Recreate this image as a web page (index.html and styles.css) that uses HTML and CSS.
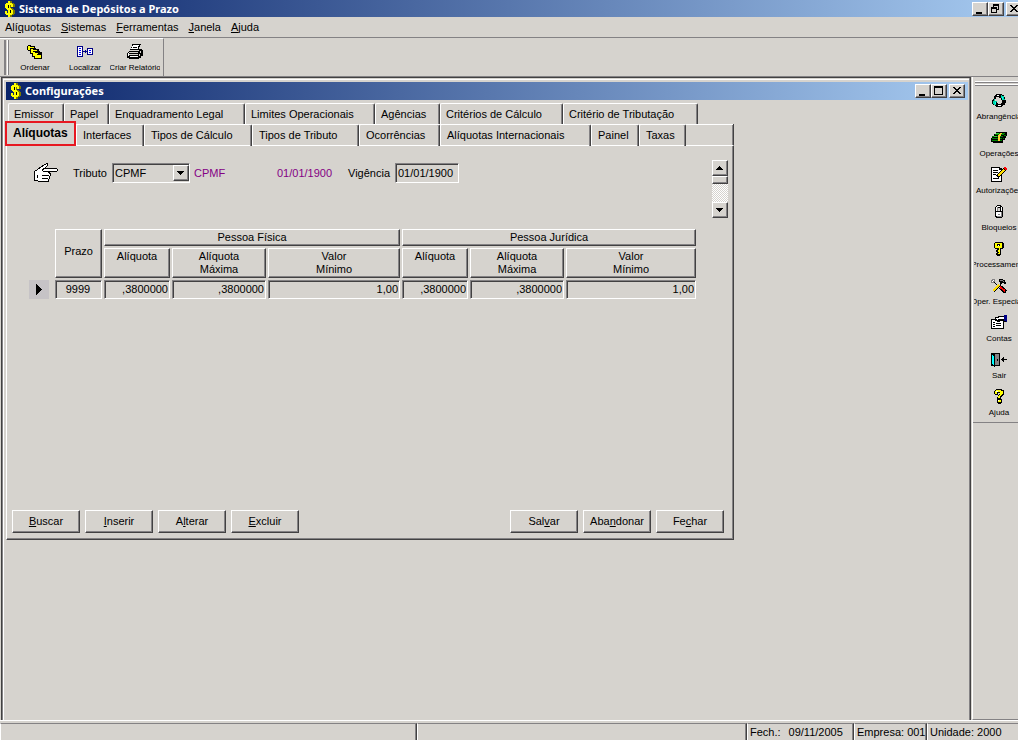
FILE: index.html
```html
<!DOCTYPE html>
<html lang="pt-BR">
<head>
<meta charset="utf-8">
<title>Sistema de Depósitos a Prazo</title>
<link rel="stylesheet" href="styles.css">
</head>
<body>
<svg class="defs" aria-hidden="true">
  <symbol id="dollar" viewBox="0 0 12 16">
    <path fill="#000" d="M6 0h1v2h-1zM9 4h1v2h-1zM10 3h1v3h-1zM3 6h1v1h-1zM9 9h2v4h-1v1h-2v1h-1v-2h2zM2 13h3v1h-3zM5 15h3v1h-3z"/>
    <path fill="#7b7900" d="M6 0h2v2h2v1h1v3h-2v-2h-2v3h2v1h1v1h1v4h-1v1h-2v2h-2zM4 7h2v1h-2z"/>
    <path fill="#ffff00" d="M4 0h2v2h2v1h1v3h-2v-2h-1v3h1v1h1v1h1v4h-1v1h-2v2h-2v-2h-2v-1h-1v-3h2v2h1v-3h-1v-1h-1v-1h-1v-4h1v-1h2z"/>
    <path fill="#000" d="M4 4h1v3h-1zM6 9h1v3h-1z"/>
  </symbol>
  <symbol id="min" viewBox="0 0 12 10"><path d="M2 8h6v2h-6z"/></symbol>
  <symbol id="max" viewBox="0 0 12 10"><path fill-rule="evenodd" d="M1 0h9v9h-9zM2 2h7v6h-7z"/></symbol>
  <symbol id="restore" viewBox="0 0 12 10"><path fill-rule="evenodd" d="M3 0h6v6h-2v3h-6v-6h2zM4 2v1h3v2h1v-3zM2 5v3h4v-3z"/></symbol>
  <symbol id="close" viewBox="0 0 12 10"><path d="M2 1h2v1h1v1h2v-1h1v-1h2v1h-1v1h-1v1h-1v1h1v1h1v1h1v1h-2v-1h-1v-1h-2v1h-1v1h-2v-1h1v-1h1v-1h1v-1h-1v-1h-1v-1h-1z"/></symbol>
  <symbol id="up" viewBox="0 0 8 4"><path d="M3 0h1v1h1v1h1v1h1v1h-7v-1h1v-1h1v-1h1z"/></symbol>
  <symbol id="down" viewBox="0 0 8 4"><path d="M0 0h7v1h-1v1h-1v1h-1v1h-1v-1h-1v-1h-1v-1h-1z"/></symbol>
</svg>

<div class="app">
  <header class="titlebar">
    <svg class="dollar"><use href="#dollar"/></svg>
    <h1 class="title">Sistema de Depósitos a Prazo</h1>
    <div class="winbtns winbtns-app">
      <button class="winbtn" aria-label="Minimizar"><svg><use href="#min"/></svg></button>
      <button class="winbtn" aria-label="Restaurar"><svg><use href="#restore"/></svg></button>
      <button class="winbtn winbtn-close" aria-label="Fechar"><svg><use href="#close"/></svg></button>
    </div>
  </header>

  <nav class="menubar">
    <button>Alí<u>q</u>uotas</button>
    <button><u>S</u>istemas</button>
    <button><u>F</u>erramentas</button>
    <button><u>J</u>anela</button>
    <button><u>A</u>juda</button>
  </nav>

  <div class="toolbar">
    <div class="grip"></div>
    <button class="tool">
      <svg viewBox="0 0 16 16"><path d="M1 1h3v1h4v2h1v1h3v2h1v1h2v7h-8v-2h-2v-3h-2v-3h-2v-1h-1v-4h1z"/><path fill="#ff0" d="M1 2h2v1h4v1h-4v2h-2zM4 5h2v1h4v1h-4v2h-2zM6 8h2v1h3v1h-3v2h-2zM8 10h2v1h4v3h-6z"/></svg>
      <span>Ordenar</span>
    </button>
    <button class="tool">
      <svg viewBox="0 0 16 16"><path fill="#000084" d="M0 2h6v11h-6zM10 4h6v7h-6zM6 7h2v1h-2zM8 6h1v3h-1zM9 7h1v1h-1z"/><path fill="#fff" d="M1 3h4v9h-4zM11 5h4v5h-4z"/><path fill="#00f" d="M2 4h2v1h-2zM2 6h2v1h-2zM2 8h2v1h-2zM2 10h2v1h-2zM12 6h2v1h-2zM12 8h2v1h-2z"/></svg>
      <span>Localizar</span>
    </button>
    <button class="tool">
      <svg viewBox="0 0 16 16"><path d="M5 0h9v1h-1v2h-1v2h3v1h1v6h-2v2h-2v1h-10v-1h-2v-5h1v-1h1v-1h1v-2h1v-2h1z"/><path fill="#fff" d="M6 1h6v1h-1v3h-7v-1h1v-2h1zM1 9h1v3h-1zM3 12h8v1h-8z"/><path d="M6 3h4v1h-4z"/><path fill="#d6d3ce" d="M4 6h8v1h-9v-1zM2 8h9v1h-9zM2 10h9v1h-9zM13 7h1v2h-1zM12 10h1v2h-1z"/></svg>
      <span>Criar Relatório</span>
    </button>
  </div>

  <div class="workspace">
    <main class="mdi">
      <section class="child">
        <header class="titlebar titlebar-child">
          <svg class="dollar"><use href="#dollar"/></svg>
          <h2 class="title">Configurações</h2>
          <div class="winbtns">
            <button class="winbtn" aria-label="Minimizar janela"><svg><use href="#min"/></svg></button>
            <button class="winbtn" aria-label="Maximizar janela"><svg><use href="#max"/></svg></button>
            <button class="winbtn winbtn-close" aria-label="Fechar janela"><svg><use href="#close"/></svg></button>
          </div>
        </header>

        <div class="form">
          <div class="tabs tabs-back" role="tablist">
            <button class="tab" role="tab">Emissor</button>
            <button class="tab" role="tab">Papel</button>
            <button class="tab" role="tab">Enquadramento Legal</button>
            <button class="tab" role="tab">Limites Operacionais</button>
            <button class="tab" role="tab">Agências</button>
            <button class="tab" role="tab">Critérios de Cálculo</button>
            <button class="tab" role="tab">Critério de Tributação</button>
          </div>
          <div class="tabs tabs-front" role="tablist">
            <button class="tab tab-active" role="tab" aria-selected="true">Alíquotas</button>
            <button class="tab" role="tab">Interfaces</button>
            <button class="tab" role="tab">Tipos de Cálculo</button>
            <button class="tab" role="tab">Tipos de Tributo</button>
            <button class="tab" role="tab">Ocorrências</button>
            <button class="tab" role="tab">Alíquotas Internacionais</button>
            <button class="tab" role="tab">Painel</button>
            <button class="tab" role="tab">Taxas</button>
          </div>

          <div class="page" role="tabpanel">
            <div class="filter">
              <svg class="hand" viewBox="0 0 24 20"><path fill="#fff" stroke="#000" d="M.5 8.500L3.500 6.500L10.500 1.500L13.500 .5V2.500L10.500 5.500H22.500L23.500 6.500V7.500L22.500 8.500H14.500V9.500L16.500 10.500V12.500L15.500 13.500V15.500L14.500 16.500V18.500H5.500L2.500 17.500H.5Z"/><path fill="none" stroke="#000" d="M10 5.500L8 7.500M9 8.500H15M8 12.500H15M8 15.500H14M3.500 12V15"/></svg>
              <label for="tributo">Tributo</label>
              <div class="combo">
                <select id="tributo"><option>CPMF</option></select>
                <span class="combo-arrow"><svg class="arrow"><use href="#down"/></svg></span>
              </div>
              <output class="info info-name">CPMF</output>
              <output class="info info-date">01/01/1900</output>
              <label class="label-date" for="vigencia">Vigência</label>
              <input class="field" id="vigencia" value="01/01/1900">
              <div class="scroll">
                <button class="scroll-btn" aria-label="Anterior"><svg class="arrow"><use href="#up"/></svg></button>
                <span class="thumb"></span>
                <span class="track"></span>
                <button class="scroll-btn" aria-label="Próximo"><svg class="arrow"><use href="#down"/></svg></button>
              </div>
            </div>

            <table class="rates">
              <colgroup><col class="c-mark"><col class="c-term"><col class="c-rate"><col class="c-max"><col class="c-min"><col class="c-rate"><col class="c-max"><col class="c-min"></colgroup>
              <thead>
                <tr class="group-row"><td rowspan="2"></td><th class="term" rowspan="2">Prazo</th><th colspan="3">Pessoa Física</th><th colspan="3">Pessoa Jurídica</th></tr>
                <tr class="head-row"><th>Alíquota</th><th>Alíquota<br>Máxima</th><th>Valor<br>Mínimo</th><th>Alíquota</th><th>Alíquota<br>Máxima</th><th>Valor<br>Mínimo</th></tr>
              </thead>
              <tbody>
                <tr>
                  <td><span class="mark"><svg viewBox="0 0 6 11"><path d="M0 0h1v1h1v1h1v1h1v1h1v1h1v1h-1v1h-1v1h-1v1h-1v1h-1v1h-1z"/></svg></span></td>
                  <td><input class="cell cell-term" aria-label="Prazo" value="9999"></td>
                  <td><input class="cell" aria-label="Alíquota, pessoa física" value=",3800000"></td>
                  <td><input class="cell" aria-label="Alíquota máxima, pessoa física" value=",3800000"></td>
                  <td><input class="cell" aria-label="Valor mínimo, pessoa física" value="1,00"></td>
                  <td><input class="cell" aria-label="Alíquota, pessoa jurídica" value=",3800000"></td>
                  <td><input class="cell" aria-label="Alíquota máxima, pessoa jurídica" value=",3800000"></td>
                  <td><input class="cell" aria-label="Valor mínimo, pessoa jurídica" value="1,00"></td>
                </tr>
              </tbody>
            </table>

            <div class="actions">
              <button class="btn"><u>B</u>uscar</button>
              <button class="btn"><u>I</u>nserir</button>
              <button class="btn">A<u>l</u>terar</button>
              <button class="btn"><u>E</u>xcluir</button>
              <button class="btn btn-push">Sal<u>v</u>ar</button>
              <button class="btn">Aba<u>n</u>donar</button>
              <button class="btn">Fe<u>c</u>har</button>
            </div>
          </div>
        </div>
      </section>
    </main>

    <aside class="dock">
      <div class="dock-tools">
        <div class="grip-h"></div>
        <button class="tool"><svg viewBox="0 0 16 16"><path d="M5 1h6v1h2v2h1v3h1v3h-1v2h-2v1h-1v1h-6v-1h-1v-1h-2v-1h-1v-4h1v-1h1v-3h1v-1h1z"/><path fill="#d6d3ce" d="M5 4h3v1h2v2h1v3h-1v1h-3v-1h-1v-2h-2v-2h1z"/><path fill="#00d6a5" d="M10 2h1v1h2v3h1v1h-3v-2h-1zM3 6h1v2h2v1h-1v3h-2v-1h-1v-3h1z"/><path fill="#fff" d="M6 2h2v1h-2zM7 12h3v1h-3z"/><path fill="#0ff" d="M11 4h1v2h-1zM4 9h1v2h-1z"/></svg><span>Abrangência</span></button>
        <button class="tool"><svg viewBox="0 0 16 16"><path d="M5 2h11v4h-1v2h-1v2h-2v3h-10v-1h-2v-4h1v-2h2v-2h2z"/><path fill="#008200" d="M5 3h9v1h-1v1h-9v-1h1zM2 6h10v1h-11v-1zM1 8h10v1h-10zM1 10h10v1h-10zM13 5h2v1h-2zM12 8h1v1h-1z"/><path fill="#ffce31" d="M9 3h2v1h-1v2h-1v1h-2v-2h1v-1h1zM7 7h2v4h-2z"/><path fill="#31ce31" d="M6 3h2v1h-3v-1zM3 6h3v1h-3z"/></svg><span>Operações</span></button>
        <button class="tool"><svg viewBox="0 0 16 16"><path d="M0 0h9v1h2v14h-11z"/><path fill="#fff" d="M1 1h7v2h2v11h-9z"/><path d="M2 3h5v1h-5zM2 5h5v1h-5zM2 7h3v1h-3zM2 11h6v1h-6z"/><path fill="none" stroke="#000" stroke-width="4" d="M6 10L15 1"/><path fill="none" stroke="#ffde00" stroke-width="2" d="M7 9L13 3"/><path fill="#f00" d="M13 0h2v1h1v2h-2v-1h-1z"/></svg><span>Autorizações</span></button>
        <button class="tool"><svg viewBox="0 0 16 16"><path d="M6 1h4v1h1v1h1v10h-1v1h-6v-1h-1v-10h1v-1h1z"/><path fill="#fff" d="M6 2h3v1h-3zM5 3h1v4h-1zM10 3h1v4h-1zM5 8h5v4h-5z"/><path fill="#d6d3ce" d="M7 4h2v3h-2z"/><path fill="#848284" d="M6 3h1v4h-1zM10 8h1v5h-5v-1h4zM7 10h2v1h-2z"/></svg><span>Bloqueios</span></button>
        <button class="tool"><svg viewBox="0 0 16 16"><path d="M4 1h8v1h1v5h-1v1h-2v6h-1v1h-3v-1h-1v-2h1v-1h-1v-2h1v-1h-2v-1h-1v-5h1z"/><path fill="#ff0" d="M4 2h7v5h-2v6h-2v-1h1v-1h-1v-2h1v-2h-4z"/><path d="M6 3h3v2h-3z"/><path fill="#fff" d="M7 4h1v1h-1z"/></svg><span>Processamento</span></button>
        <button class="tool"><svg viewBox="0 0 16 16"><path fill="none" stroke="#000" stroke-width="1" d="M2 3L8 9M12 4L3 14"/><path fill="#fff" stroke="#848284" d="M.5 2.500h1v-1h2v2h-1v1h-2z"/><path d="M8 1h4v1h2v2h1v2h-2v-1h-2v1h-2v-2h-1z"/><path fill="#848284" d="M9 2h3v1h-3zM12 3h1v1h-1z"/><path fill="none" stroke="#ffde00" stroke-width="2" d="M8 7L2 13"/><path fill="none" stroke="#000" stroke-width="4" d="M9 9L15 14"/><path fill="none" stroke="#f00" stroke-width="2" d="M9 9L14 13"/></svg><span>Oper. Especiais</span></button>
        <button class="tool"><svg viewBox="0 0 16 16"><path d="M0 4h4v-2h3v-1h8v6h-2v7h-13z"/><path fill="#fff" d="M1 5h3v1h2v1h3v-1h3v7h-11zM5 3h3v-1h5v2h-3v1h-4z"/><path d="M2 7h2v1h-2zM5 8h5v1h-5zM2 9h2v1h-2zM5 10h5v1h-5zM2 11h2v1h-2zM7 4h3v1h-3z"/><path fill="#000084" d="M13 0h3v7h-1v-1h-2z"/></svg><span>Contas</span></button>
        <button class="tool"><svg viewBox="0 0 16 16"><path d="M0 1h9v13h-5v1h-1v-1h-3z"/><path fill="#848284" d="M4 2h4v11h-4z"/><path fill="#0ff" d="M1 3h1v1h1v9h-1v-1h-1z"/><path d="M3 3h1v12h-1zM6 7h1v2h-1zM10 7h1v-1h1v-1h1v2h3v1h-3v2h-1v-1h-1v-1h-1z"/></svg><span>Sair</span></button>
        <button class="tool"><svg viewBox="0 0 16 16"><path d="M5 0h6v1h2v5h-1v1h-1v1h-1v2h1v4h-1v1h-3v-1h-1v-6h1v-2h1v-1h1v-1h-2v2h-3v-1h-1v-3h1v-1h1z"/><path fill="#ff0" d="M5 1h5v1h2v3h-1v1h-1v1h-1v2h-2v-2h1v-1h1v-3h-3v2h-2v-3h1zM7 11h3v2h-3z"/><path fill="#fff" d="M5 2h2v1h-2zM7 11h1v1h-1z"/></svg><span>Ajuda</span></button>
      </div>
    </aside>
  </div>

  <footer class="status">
    <span class="panel panel-first"></span>
    <span class="panel panel-fill"></span>
    <span class="panel panel-date"><span>Fech.:</span><span>09/11/2005</span></span>
    <span class="panel panel-company">Empresa: 001</span>
    <span class="panel panel-last">Unidade: 2000</span>
  </footer>
</div>
</body>
</html>
```

FILE: styles.css
```css
:root {
  --face: #d6d3ce;
  --light: #ffffff;
  --shadow: #848284;
  --dark: #424142;
}

* { box-sizing: border-box; }

body {
  margin: 0;
  background: var(--face);
  color: #000;
  font: 11px/13px "Liberation Sans", Arial, sans-serif;
}

button, input, select {
  margin: 0;
  padding: 0;
  border: 0;
  border-radius: 0;
  background: none;
  color: inherit;
  font: inherit;
}

svg { display: block; shape-rendering: crispEdges; }
.defs { display: none; }

.app {
  display: flex;
  flex-direction: column;
  height: 100vh;
  overflow: hidden;
}

/* Title bars */
.titlebar {
  display: flex;
  flex: none;
  align-items: center;
  height: 17px;
  padding-left: 4px;
  background: linear-gradient(90deg, #0a246a, #a6caf0);
  color: #fff;
}
.titlebar-child { height: 18px; padding-right: 3px; }
.dollar { width: 12px; height: 16px; }
.title {
  margin: 0 auto 0 3px;
  font: bold 11px/16px "Noto Sans", Tahoma, sans-serif;
}
.winbtns { display: flex; }
.winbtns-app { margin-right: -4px; }
.winbtn {
  width: 16px;
  height: 14px;
  padding: 1px;
  background: var(--face);
  border: 1px solid;
  border-color: var(--light) var(--dark) var(--dark) var(--light);
  box-shadow: inset -1px -1px var(--shadow);
}
.winbtn svg { width: 12px; height: 10px; }
.winbtn-close { margin-left: 2px; }

/* Menu and toolbars */
.menubar {
  display: flex;
  flex: none;
  gap: 10px;
  height: 21px;
  padding: 0 5px;
  border-bottom: 1px solid var(--shadow);
}
.toolbar {
  display: flex;
  flex: none;
  align-self: flex-start;
  height: 38px;
  padding: 1px 3px 0 4px;
  border-top: 1px solid var(--light);
  border-right: 1px solid var(--shadow);
}
.grip {
  width: 5px;
  height: 35px;
  margin-right: 1px;
  border: solid;
  border-width: 0 1px;
  border-color: var(--light) var(--shadow);
  box-shadow: inset 1px 0 var(--shadow), inset -1px 0 var(--light);
}
.tool {
  display: flex;
  flex: none;
  flex-direction: column;
  align-items: center;
  gap: 3px;
  width: 50px;
  height: 37px;
  padding-top: 4px;
  overflow: hidden;
  font-size: 8px;
  line-height: 10px;
  white-space: nowrap;
}
.tool svg { flex: none; width: 16px; height: 16px; }

.workspace { display: flex; flex: 1; min-height: 0; border-top: 1px solid var(--shadow); }
.mdi {
  display: flex;
  flex: 1;
  min-width: 0;
  margin-left: 1px;
  border: solid var(--dark);
  border-width: 1px 1px 0 1px;
  box-shadow: inset 1px 0 var(--shadow), inset -1px 0 var(--shadow);
}
.child {
  flex: 1;
  min-width: 0;
  margin: 1px 1px 0;
  padding: 2px 1px 0 2px;
  border: solid var(--light);
  border-width: 1px 0 0 1px;
}
.dock {
  flex: none;
  width: 46px;
  margin-left: 1px;
  border-left: 1px solid var(--light);
  border-bottom: 1px solid var(--shadow);
  overflow: hidden;
}
.dock-tools { padding: 4px 0 0 1px; border-bottom: 1px solid var(--shadow); }
.grip-h {
  height: 5px;
  margin: 0 0 3px 1px;
  border: solid;
  border-width: 1px 0;
  border-color: var(--light) transparent var(--shadow);
  box-shadow: inset 0 1px var(--shadow), inset 0 -1px var(--light);
}

/* Tabs */
.form { max-width: 728px; padding-top: 3px; }
.tabs { display: grid; height: 21px; }
.tabs-back {
  grid-template-columns: 56px 45px 136px 130px 65px 123px 135px;
  padding-left: 2px;
}
.tabs-front {
  grid-template-columns: 69px 68px 108px 107px 81px 151px 48px 47px;
  padding-left: 1px;
  border-right: 1px solid var(--dark);
  box-shadow: inset 0 1px var(--light), inset -1px 0 var(--shadow);
}
.tab {
  padding: 1px 0 0 5px;
  border: solid;
  border-width: 1px 1px 0 1px;
  border-color: var(--light) var(--dark) var(--light) var(--light);
  border-radius: 2px 2px 0 0;
  box-shadow: inset -1px 0 var(--shadow);
  text-align: left;
  white-space: nowrap;
}
.tabs-front .tab { padding: 0 0 0 6px; }
.tabs-front .tab-active {
  z-index: 1;
  height: 25px;
  margin: -3px 0 0 -2px;
  border: 2px solid #e71821;
  border-radius: 0;
  background: var(--face);
  box-shadow: none;
  font-size: 12px;
  font-weight: bold;
}

/* Tab page */
.page {
  display: flex;
  flex-direction: column;
  min-height: 395px;
  padding: 14px 9px 6px 5px;
  border: 1px solid;
  border-color: var(--light) var(--dark) var(--dark) var(--light);
  box-shadow: inset -1px -1px var(--shadow);
}
.filter {
  display: flex;
  align-items: center;
  height: 58px;
  padding-left: 22px;
}
.filter > :not(.scroll) { margin-bottom: 32px; }
.hand { width: 24px; height: 20px; margin-right: 15px; }
.combo {
  display: flex;
  width: 78px;
  height: 20px;
  margin-left: 3px;
}
.filter label { width: 36px; }
.filter .label-date { width: 47px; }
.combo, .field, .cell {
  border: 1px solid;
  border-color: var(--shadow) var(--light) var(--light) var(--shadow);
  box-shadow: inset 1px 1px var(--dark);
}
.combo select { flex: 1; min-width: 0; padding-left: 2px; appearance: none; }
.combo-arrow, .scroll-btn, .thumb {
  display: grid;
  flex: none;
  place-items: center;
  width: 16px;
  height: 16px;
  border: 1px solid;
  border-color: var(--light) var(--dark) var(--dark) var(--light);
  box-shadow: inset -1px -1px var(--shadow);
}
.combo-arrow { margin-top: 1px; pointer-events: none; }
.arrow { width: 8px; height: 4px; }
.info { color: #840084; }
.info-name { width: 83px; margin-left: 4px; }
.info-date { width: 71px; }
.field { width: 64px; height: 20px; padding-left: 2px; }
.scroll {
  display: flex;
  flex-direction: column;
  width: 16px;
  height: 58px;
  margin: 0 -4px 0 auto;
}
.thumb { height: 8px; }
.track {
  flex: 1;
  background: repeating-conic-gradient(#fff 0 25%, var(--face) 0 50%) 0 0 / 2px 2px;
}

/* Rates table */
.rates {
  width: 671px;
  margin: 9px 0 0 15px;
  table-layout: fixed;
  border-collapse: separate;
  border-spacing: 2px;
}
.c-mark { width: 24px; }
.c-term { width: 47px; }
.c-rate { width: 66px; }
.c-max { width: 94px; }
.c-min { width: 132px; }
.rates col:last-child { width: 130px; }
.rates td { padding: 0; }
.rates th {
  padding: 1px 0 0;
  border: solid;
  border-width: 1px 1px 2px 1px;
  border-color: var(--light) var(--dark) var(--dark) var(--light);
  border-bottom-width: 1px;
  box-shadow: inset -1px -1px var(--shadow);
  font-weight: normal;
  vertical-align: top;
}
.rates th.term { vertical-align: middle; padding-bottom: 6px; }
.group-row { height: 17px; }
.head-row { height: 30px; }
.mark {
  display: grid;
  place-items: center;
  width: 20px;
  height: 19px;
  background: #c6c3c6;
}
.mark svg { width: 6px; height: 11px; }
.cell { display: block; width: 100%; height: 19px; padding: 0 1px 1px 0; text-align: right; }
.cell-term { text-align: center; }

/* Command buttons */
.actions { display: flex; gap: 5px; margin-top: auto; }
.btn {
  width: 68px;
  height: 23px;
  border: 1px solid;
  border-color: var(--light) var(--dark) var(--dark) var(--light);
  box-shadow: inset -1px -1px var(--shadow);
}
.btn-push { margin-left: auto; }

/* Status bar */
.status {
  display: flex;
  flex: none;
  height: 20px;
  padding-top: 2px;
  border-top: 1px solid var(--light);
}
.panel {
  display: flex;
  gap: 8px;
  align-items: center;
  padding: 0 0 0 2px;
  border: solid;
  border-width: 1px 1px 0 1px;
  border-color: var(--shadow) var(--dark) var(--face) var(--light);
  box-shadow: inset -1px 0 var(--shadow);
  white-space: nowrap;
}
.panel-first { width: 41%; }
.panel-fill { flex: 1; }
.panel-date { width: 107px; }
.panel-company { width: 73px; }
.panel-last { width: 91px; border-right: 0; box-shadow: none; }
```
